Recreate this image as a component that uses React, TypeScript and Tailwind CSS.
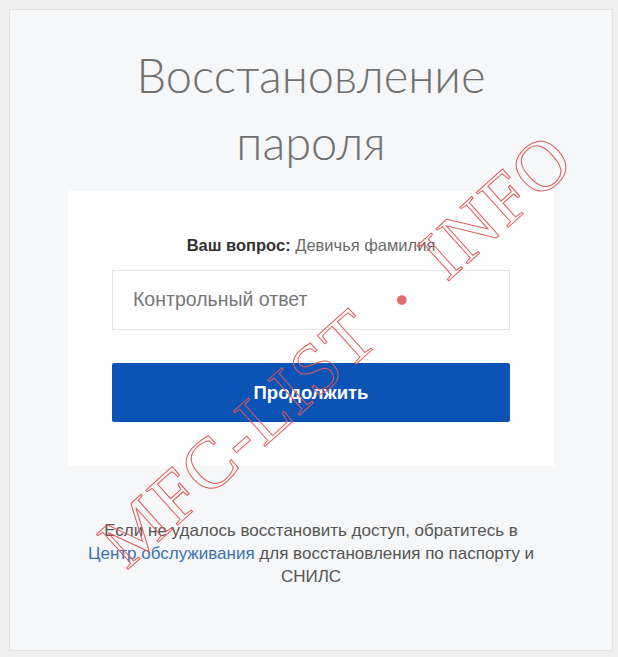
import React from "react";

export default function App() {
  return (
    <div className="relative w-[618px] h-[657px] overflow-hidden bg-[#efefef] pt-[9px] pl-[9px] pr-[5px] pb-[6px] font-['Liberation_Sans',Arial,sans-serif]">
      <div className="flex h-full flex-col items-center border border-[#e4e4e4] bg-[#f6f7f8]">
        <h1 className="mt-[32px] text-center font-['Lato',sans-serif] text-[47px] font-light leading-[67px] text-[#707070]">
          Восстановление
          <br />
          пароля
        </h1>

        <div className="mt-[15px] flex w-[486px] flex-col items-center bg-white pb-[44px] pt-[44px]">
          <p className="text-[16.5px] leading-[20px] text-[#6a6a6a]">
            <span className="font-bold text-[#333]">Ваш вопрос:</span> Девичья фамилия
          </p>
          <div className="mt-[15px] flex h-[60px] w-[398px] items-center border border-[#e4e4e4] px-[20px]">
            <span className="text-[19.5px] text-[#777]">Контрольный ответ</span>
          </div>
          <button className="mt-[33px] flex h-[59px] w-[398px] items-center justify-center rounded-[2px] bg-[#0c53b6] text-[18.5px] font-bold text-white">
            Продолжить
          </button>
        </div>

        <p className="mt-[53px] w-[452px] text-center text-[17px] leading-[23px] text-[#555]">
          Если не удалось восстановить доступ, обратитесь в{" "}
          <span className="text-[#3a72b4]">Центр обслуживания</span> для восстановления по паспорту и СНИЛС
        </p>
      </div>

      {/* watermark stamp */}
      <div className="pointer-events-none absolute left-[336px] top-[350px] -translate-x-1/2 -translate-y-1/2 -rotate-[42deg] whitespace-nowrap font-['Liberation_Serif',serif] text-[72px] leading-none tracking-[2px] text-transparent [-webkit-text-stroke:1px_#e05a5a]">
        MFC-LIST <span className="px-[16px] text-[40px] align-middle text-[#e07070] [-webkit-text-stroke:0]">•</span> INFO
      </div>
    </div>
  );
}
